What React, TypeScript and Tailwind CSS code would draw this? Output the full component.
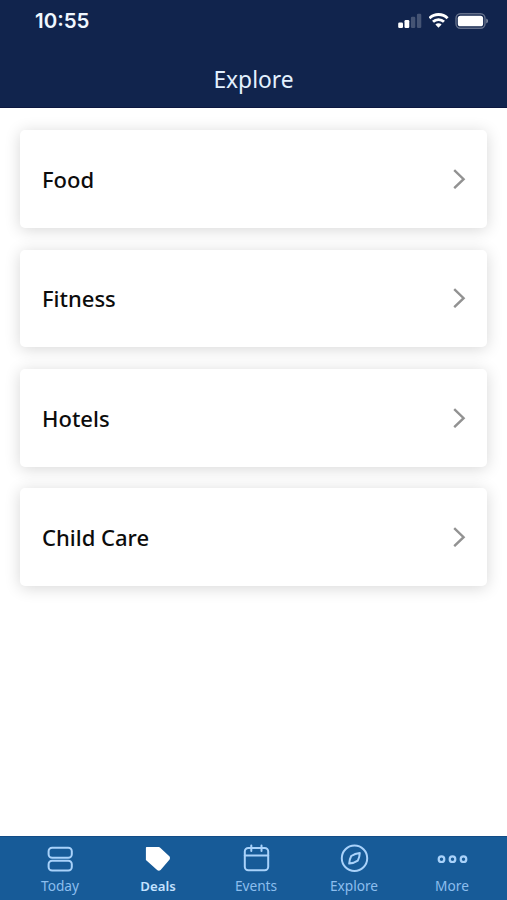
import type { ReactNode } from "react";

interface Tab {
  label: string;
  active?: boolean;
  icon: ReactNode;
}

const categories = ["Food", "Fitness", "Hotels", "Child Care"];

const tabs: Tab[] = [
  {
    label: "Today",
    icon: (
      <svg width="30" height="30" viewBox="0 0 30 30" fill="none" stroke="currentColor" strokeWidth="2">
        <rect x="3.6" y="4.8" width="23.2" height="9.9" rx="3.5" />
        <rect x="3.6" y="17.7" width="23.2" height="9.9" rx="3.5" />
      </svg>
    ),
  },
  {
    label: "Deals",
    active: true,
    icon: (
      <svg width="30" height="30" viewBox="0 0 30 30" fill="currentColor">
        <path d="M3.6 4H15.8Q16.5 4 17.2 4.7L26.6 13.6Q27.5 15 26.6 16.4L17.6 26.9Q16 28.3 14.4 27.2L2.9 17V4.7Q2.9 4 3.6 4Z" />
      </svg>
    ),
  },
  {
    label: "Events",
    icon: (
      <svg width="30" height="30" viewBox="0 0 30 30" fill="none" stroke="currentColor" strokeWidth="2" strokeLinecap="round">
        <rect x="3.8" y="5" width="23.4" height="22.3" rx="3.5" />
        <path d="M3.8 12.4H27.2M10.3 2.5V8M20.5 2.5V8" />
      </svg>
    ),
  },
  {
    label: "Explore",
    icon: (
      <svg width="30" height="30" viewBox="0 0 30 30" fill="none" stroke="currentColor" strokeWidth="2" strokeLinejoin="round">
        <circle cx="15.5" cy="15.3" r="12.7" />
        <path d="M20.8 10Q20.6 14.1 18.8 17.6Q15 20.1 10.2 20.6Q10.4 16.5 12.2 13Q16 10.5 20.8 10Z" />
      </svg>
    ),
  },
  {
    label: "More",
    icon: (
      <svg width="32" height="30" viewBox="0 0 32 30" fill="none" stroke="currentColor" strokeWidth="2.2">
        <circle cx="5.5" cy="16.2" r="2.8" />
        <circle cx="16.5" cy="16.2" r="2.8" />
        <circle cx="27.5" cy="16.2" r="2.8" />
      </svg>
    ),
  },
];

function StatusBar() {
  return (
    <div className="flex h-[41px] items-center justify-between pl-[35px] pr-[19px]">
      <span className="pt-[2px] font-['Inter','Liberation_Sans',sans-serif] text-[20.5px] font-semibold leading-none text-[#f0f7ff]">
        10:55
      </span>
      <div className="flex items-center gap-[6px]">
        {/* Signal strength */}
        <svg width="25" height="16" viewBox="0 0 25 16" fill="#ffffff">
          <rect x="0.2" y="9.5" width="4.8" height="5.5" rx="1.2" />
          <rect x="6.5" y="7" width="4.8" height="8" rx="1.2" />
          <rect x="12.9" y="3.8" width="4.4" height="11.2" rx="1.2" opacity="0.22" />
          <rect x="18.9" y="0.8" width="4.4" height="14.2" rx="1.2" opacity="0.22" />
        </svg>
        {/* Wi-Fi */}
        <svg width="20" height="16" viewBox="0 0 20 16" fill="none" stroke="#ffffff" strokeWidth="2.8">
          <path d="M0.4 5.2A13 13 0 0 1 18.6 5.2" />
          <path d="M4 8.8A7.8 7.8 0 0 1 15 8.8" />
          <path d="M9.5 14.7L6.4 11.6A4.4 4.4 0 0 1 12.6 11.6Z" fill="#ffffff" stroke="none" />
        </svg>
        {/* Battery */}
        <svg width="33" height="16" viewBox="0 0 33 16">
          <rect x="1" y="0.7" width="29" height="14.6" rx="4.5" fill="none" stroke="#ffffff" strokeOpacity="0.35" strokeWidth="1.4" />
          <rect x="2.8" y="2.7" width="25.3" height="10.6" rx="2.6" fill="#ffffff" />
          <path d="M31.3 5.5Q33 6.3 33 8T31.3 10.5Z" fill="#ffffff" fillOpacity="0.5" />
        </svg>
      </div>
    </div>
  );
}

function CategoryCard({ title }: { title: string }) {
  return (
    <button className="flex h-[97.6px] w-full items-center justify-between rounded-[5px] bg-white pl-[22px] pr-[21px] text-left shadow-[0_2px_16px_rgba(0,0,0,0.16)]">
      <span className="text-[22px] font-medium leading-none text-[#0c0c0c]">{title}</span>
      <svg width="13" height="20" viewBox="0 0 13 20" fill="none" stroke="#929292" strokeWidth="2.4">
        <path d="M1.2 1.2L10.6 10.2L1.2 19.2" />
      </svg>
    </button>
  );
}

export default function App() {
  return (
    <div className="flex h-[900px] w-[507px] flex-col overflow-hidden bg-white font-['Noto_Sans','Open_Sans',sans-serif]">
      <header className="h-[108px] shrink-0 border-b border-[#0d1840] bg-[#11244d]">
        <StatusBar />
        <h1 className="flex h-[78px] items-center justify-center text-[22.8px] leading-none text-[#e3f1ff]">
          Explore
        </h1>
      </header>

      <main className="flex flex-1 flex-col gap-[21.8px] pl-5 pr-[20.5px] pt-[22.2px]">
        {categories.map((title) => (
          <CategoryCard key={title} title={title} />
        ))}
      </main>

      <nav className="flex h-[64.5px] shrink-0 border-t border-[#124c86] bg-[#175b98] pl-[11px] pr-[6px]">
        {tabs.map((tab) => (
          <button
            key={tab.label}
            className={`flex flex-1 flex-col items-center pt-[6px] ${tab.active ? "text-white" : "text-[#a9d2fa]"}`}
          >
            {tab.icon}
            <span
              className={`mt-[5px] leading-[16px] ${tab.active ? "text-[13.2px] font-semibold text-[#c4e2ff]" : "text-[13.7px] text-[#8cbeee]"}`}
            >
              {tab.label}
            </span>
          </button>
        ))}
      </nav>
    </div>
  );
}
